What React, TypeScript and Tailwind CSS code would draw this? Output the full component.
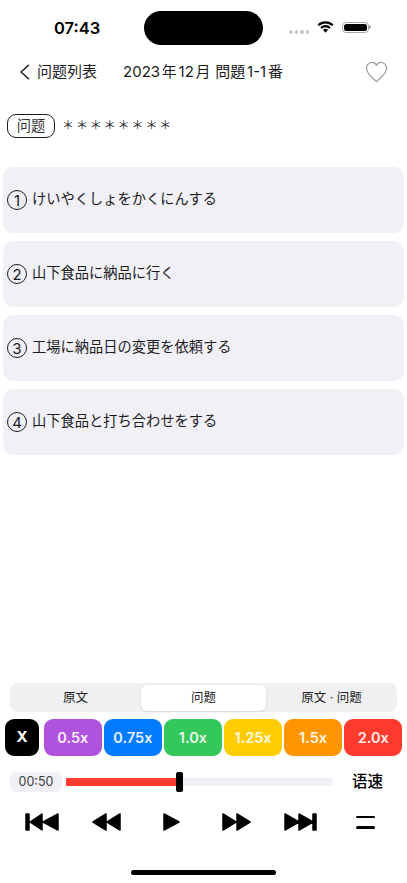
const jp = "font-['Inter','Noto_Sans_CJK_JP',sans-serif]";

const options = [
  { no: 1, text: "けいやくしょをかくにんする" },
  { no: 2, text: "山下食品に納品に行く" },
  { no: 3, text: "工場に納品日の変更を依頼する" },
  { no: 4, text: "山下食品と打ち合わせをする" },
];

const speeds = [
  { label: "0.5x", bg: "bg-[#af52de]" },
  { label: "0.75x", bg: "bg-[#007aff]" },
  { label: "1.0x", bg: "bg-[#34c759]" },
  { label: "1.25x", bg: "bg-[#ffcc00]" },
  { label: "1.5x", bg: "bg-[#ff9500]" },
  { label: "2.0x", bg: "bg-[#ff3b30]" },
];

function StatusBar() {
  return (
    <div className="flex h-[45px] shrink-0 items-end">
      <span className="ml-[54px] mb-[7px] w-[46px] text-[16.5px] leading-5 font-semibold text-black">07:43</span>
      <div className="ml-[44px] h-[34px] w-[119px] rounded-full bg-black" />
      <div className="ml-[26px] mb-[11.5px] flex gap-[2px]">
        {[0, 1, 2, 3].map((i) => (
          <div key={i} className="h-[3.5px] w-[3.5px] rounded-full bg-[#c8c8c8]" />
        ))}
      </div>
      <svg className="ml-[8px] mb-[12px]" width="17" height="12" viewBox="0 0 17 12" fill="none">
        <path d="M1.300 4.200C3.200 2.400 5.700 1.300 8.500 1.300s5.300 1.100 7.200 2.900" stroke="#000" strokeWidth="2.200" />
        <path d="M4 7c1.200-1.100 2.800-1.800 4.500-1.800S11.800 5.900 13 7" stroke="#000" strokeWidth="2.200" />
        <path d="M8.500 7.800c-1 0-1.900.4-2.500 1L8.500 11.700 11 8.800c-.6-.6-1.500-1-2.500-1z" fill="#000" />
      </svg>
      <div className="ml-[8px] mb-[12px] flex items-center">
        <div className="h-[11.5px] w-[27px] rounded-[4px] border border-[#a8a8a8] p-[1px]">
          <div className="h-full w-full rounded-[2.5px] bg-black" />
        </div>
        <div className="h-[4px] w-[1.5px] rounded-r-sm bg-[#a8a8a8]" />
      </div>
    </div>
  );
}

function NavBar() {
  return (
    <div className={`flex h-[54px] shrink-0 items-center ${jp} text-[#1c1c1e]`}>
      <svg className="ml-[19px]" width="11" height="16" viewBox="0 0 11 16" fill="none">
        <path d="M9.500 1.200 2 8l7.500 6.800" stroke="#1c1c1e" strokeWidth="1.500" strokeLinecap="round" strokeLinejoin="round" />
      </svg>
      <span className="ml-[7px] text-[15px] leading-5">问题列表</span>
      <span className="ml-[26px] flex gap-[1.75px] text-[15px] leading-5">
        <span>2023</span>
        <span>年</span>
        <span>12</span>
        <span>月</span>
        <span className="ml-[3px]">問題</span>
        <span>1-1</span>
        <span>番</span>
      </span>
      <svg className="ml-auto mr-[19px]" width="23" height="22" viewBox="0 0 24 23" fill="none">
        <path
          d="M12 21.500C7 17.500 1.500 13 1.500 7.600 1.500 4.200 4 1.500 7.200 1.500c2 0 3.800 1.100 4.800 3 1-1.900 2.800-3 4.800-3 3.200 0 5.700 2.700 5.700 6.100 0 5.400-5.500 9.900-10.500 13.900z"
          stroke="#a3a3a3"
          strokeWidth="1.400"
          strokeLinejoin="round"
        />
      </svg>
    </div>
  );
}

function OptionCard({ no, text }: { no: number; text: string }) {
  return (
    <div className="flex h-[66px] items-center gap-[5px] rounded-[10px] bg-[#f0f0f6] pl-[4px]">
      <div className="flex h-[20px] w-[20px] shrink-0 items-center justify-center rounded-full border border-[#1c1c1e] text-[15px] leading-none text-[#1c1c1e]">
        {no}
      </div>
      <span className="mb-[2px] text-[14.25px] leading-5 text-[#1c1c1e]">{text}</span>
    </div>
  );
}

function TransportIcon({ d, width }: { d: string; width: number }) {
  return (
    <svg width={width} height="18" viewBox={`0 0 ${width} 18`}>
      <path d={d} fill="#000" stroke="#000" strokeWidth="1.500" strokeLinejoin="round" />
    </svg>
  );
}

export default function App() {
  return (
    <div className={`flex h-[883px] w-[407px] flex-col overflow-hidden bg-white ${jp}`}>
      <StatusBar />
      <NavBar />

      <div className="mt-[15px] flex items-center pl-[7px]">
        <div className="flex h-[24px] w-[48px] items-center justify-center rounded-[9px] border border-[#1c1c1e] text-[14.25px] leading-none text-[#333336]">
          问题
        </div>
        <span className="ml-[7px] text-[12px] leading-6 tracking-[1.9px] text-[#1c1c1e]">＊＊＊＊＊＊＊＊</span>
      </div>

      <div className="mt-[29px] flex flex-col gap-[8px] px-[3px]">
        {options.map((o) => (
          <OptionCard key={o.no} no={o.no} text={o.text} />
        ))}
      </div>

      <div className="flex-1" />

      <div className="mx-[10px] flex h-[29px] items-center rounded-[8px] bg-[#f0f0f2] text-[12.5px] leading-4 text-[#1c1c1e]">
        <div className="flex-1 text-center">原文</div>
        <div className="flex h-[26px] w-[125px] items-center justify-center rounded-[6px] bg-white shadow-sm">问题</div>
        <div className="flex-1 text-center">原文 · 问题</div>
      </div>

      <div className="mt-[7px] flex h-[37px] gap-[2.5px] pl-[5px] pr-[5px]">
        <div className="mr-[2.5px] flex w-[34px] items-center justify-center rounded-[9px] bg-black text-[15px] font-bold text-white">
          X
        </div>
        {speeds.map((s) => (
          <div key={s.label} className={`flex flex-1 items-center justify-center rounded-[9px] text-[14.5px] font-semibold text-white/90 ${s.bg}`}>
            {s.label}
          </div>
        ))}
      </div>

      <div className="mt-[16px] flex h-[20px] items-center pl-[10px]">
        <div className="flex h-[20px] w-[52px] items-center justify-center rounded-[5px] bg-[#f0f0f6] text-[12.5px] text-[#3a3a3c]">00:50</div>
        <div className="relative ml-[4px] h-[8px] w-[267px] bg-[#f0f0f6]">
          <div className="h-full w-[112px] bg-[#ff3b30]" />
          <div className="absolute left-[110px] top-[-6px] h-[20px] w-[7px] rounded-[2px] bg-black" />
        </div>
        <span className="ml-[19px] text-[15.5px] leading-5 font-medium text-black">语速</span>
      </div>

      <div className="mt-[21px] flex h-[18px] items-center pl-[25px]">
        <TransportIcon width={34} d="M1 1h3v16H1zM17 1v16L5 9zM33 1v16L18 9z" />
        <div className="ml-[33px]">
          <TransportIcon width={29} d="M14 1v16L1 9zM28 1v16L15 9z" />
        </div>
        <div className="ml-[42px]">
          <TransportIcon width={17} d="M1 1v16l15-8z" />
        </div>
        <div className="ml-[42px]">
          <TransportIcon width={29} d="M1 1v16l13-8zM15 1v16l13-8z" />
        </div>
        <div className="ml-[33px]">
          <TransportIcon width={34} d="M1 1v16l14-8zM15 1v16l14-8zM29 1h3v16h-3z" />
        </div>
        <div className="ml-[38px] flex flex-col gap-[8px]">
          <div className="h-[2.5px] w-[19px] rounded-full bg-black" />
          <div className="h-[2.5px] w-[19px] rounded-full bg-black" />
        </div>
      </div>

      <div className="mt-[39px] mb-[8px] ml-[131px] h-[5px] w-[145px] rounded-full bg-black" />
    </div>
  );
}
